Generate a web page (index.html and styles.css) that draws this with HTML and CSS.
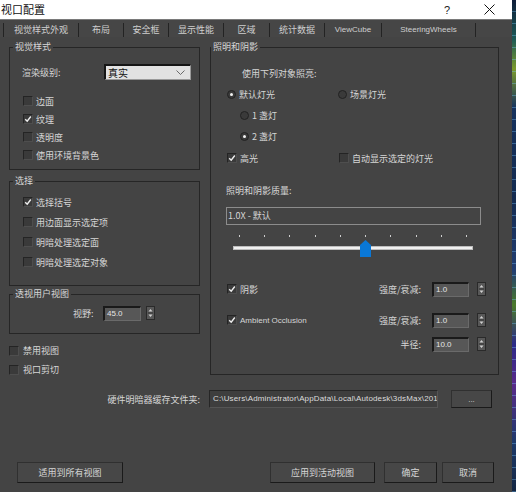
FILE: index.html
```html
<!DOCTYPE html>
<html lang="zh">
<head>
<meta charset="utf-8">
<title>视口配置</title>
<link rel="stylesheet" href="styles.css">
</head>
<body>
<div class="screen">
  <div class="dialog">
    <div class="titlebar">
      <span class="title">视口配置</span>
      <span class="help">?</span>
      <span class="close"><svg width="11" height="11" viewBox="0 0 11 11"><path d="M0.5 0.5 L10.5 10.5 M10.5 0.5 L0.5 10.5" stroke="#111" stroke-width="1" fill="none"/></svg></span>
    </div>
    <div class="tabs">
      <div class="tab first active" style="width:76px">视觉样式外观</div>
      <div class="tab" style="width:45px">布局</div>
      <div class="tab" style="width:45px">安全框</div>
      <div class="tab" style="width:55px">显示性能</div>
      <div class="tab" style="width:46px">区域</div>
      <div class="tab" style="width:55px">统计数据</div>
      <div class="tab latin" style="width:57px">ViewCube</div>
      <div class="tab latin" style="width:94px">SteeringWheels</div>
    </div>

    <div class="main">
      <div class="col-left">
        <fieldset class="group g1">
          <legend class="legend-l">视觉样式</legend>
          <div class="row-select">
            <span class="sel-label">渲染级别:</span>
            <div class="dropdown"><span>真实</span><svg width="9" height="6" viewBox="0 0 9 6"><path d="M0.5 0.5 L4.5 4.5 L8.5 0.5" stroke="#6a6a6a" fill="none"/></svg></div>
          </div>
          <div class="checks g1-checks">
            <div class="check"><span class="cb"></span><span>边面</span></div>
            <div class="check"><span class="cb on"><svg width="8" height="8" viewBox="0 0 8 8"><path d="M1.2 4.2 L3.2 6.2 L6.8 1.5" stroke="#eee" stroke-width="1.4" fill="none"/></svg></span><span>纹理</span></div>
            <div class="check"><span class="cb"></span><span>透明度</span></div>
            <div class="check"><span class="cb"></span><span>使用环境背景色</span></div>
          </div>
        </fieldset>

        <fieldset class="group g2">
          <legend class="legend-l">选择</legend>
          <div class="checks g2-checks">
            <div class="check"><span class="cb on"><svg width="8" height="8" viewBox="0 0 8 8"><path d="M1.2 4.2 L3.2 6.2 L6.8 1.5" stroke="#eee" stroke-width="1.4" fill="none"/></svg></span><span>选择括号</span></div>
            <div class="check"><span class="cb"></span><span>用边面显示选定项</span></div>
            <div class="check"><span class="cb"></span><span>明暗处理选定面</span></div>
            <div class="check"><span class="cb"></span><span>明暗处理选定对象</span></div>
          </div>
        </fieldset>

        <fieldset class="group g3">
          <legend class="legend-l">透视用户视图</legend>
          <div class="row-fov">
            <span class="fov-label">视野:</span>
            <span class="num fov-num">45.0</span>
            <span class="spin"><svg width="7" height="12" viewBox="0 0 7 12"><path d="M3.5 2 L5.5 4.5 L1.5 4.5 Z M1.5 7.5 L5.5 7.5 L3.5 10 Z" fill="#d0d0d0"/><path d="M1 6 H6" stroke="#333" stroke-width="1"/></svg></span>
          </div>
        </fieldset>

        <div class="checks loose">
          <div class="check"><span class="cb"></span><span>禁用视图</span></div>
          <div class="check"><span class="cb"></span><span>视口剪切</span></div>
        </div>
      </div>

      <div class="col-right">
        <fieldset class="group gr">
          <legend class="legend-r">照明和阴影</legend>
          <div class="r-row r1">使用下列对象照亮:</div>
          <div class="r-row r2">
            <div class="opt w111"><span class="rb on"></span><span>默认灯光</span></div>
            <div class="opt"><span class="rb"></span><span>场景灯光</span></div>
          </div>
          <div class="r-row r3"><div class="opt"><span class="rb"></span><span>1 盏灯</span></div></div>
          <div class="r-row r4"><div class="opt"><span class="rb on"></span><span>2 盏灯</span></div></div>
          <div class="r-row r5">
            <div class="opt w112"><span class="cb on"><svg width="8" height="8" viewBox="0 0 8 8"><path d="M1.2 4.2 L3.2 6.2 L6.8 1.5" stroke="#eee" stroke-width="1.4" fill="none"/></svg></span><span>高光</span></div>
            <div class="opt"><span class="cb"></span><span>自动显示选定的灯光</span></div>
          </div>
          <div class="r-row r6">照明和阴影质量:</div>
          <div class="quality">1.0X - 默认</div>
          <div class="slider">
            <div class="ticks">
              <i></i><i></i><i></i><i></i><i></i><i></i><i></i><i></i><i></i><i></i>
            </div>
            <div class="track"></div>
            <svg class="thumb" width="11" height="17" viewBox="0 0 11 17"><path d="M5.5 0 L11 5 L11 17 L0 17 L0 5 Z" fill="#0a78d7"/></svg>
          </div>
          <div class="r-row r9">
            <div class="opt"><span class="cb on"><svg width="8" height="8" viewBox="0 0 8 8"><path d="M1.2 4.2 L3.2 6.2 L6.8 1.5" stroke="#eee" stroke-width="1.4" fill="none"/></svg></span><span>阴影</span></div>
            <div class="param">
              <span class="p-label">强度/衰减:</span>
              <span class="num">1.0</span>
              <span class="spin"><svg width="7" height="12" viewBox="0 0 7 12"><path d="M3.5 2 L5.5 4.5 L1.5 4.5 Z M1.5 7.5 L5.5 7.5 L3.5 10 Z" fill="#d0d0d0"/><path d="M1 6 H6" stroke="#333" stroke-width="1"/></svg></span>
            </div>
          </div>
          <div class="r-row r10">
            <div class="opt"><span class="cb on"><svg width="8" height="8" viewBox="0 0 8 8"><path d="M1.2 4.2 L3.2 6.2 L6.8 1.5" stroke="#eee" stroke-width="1.4" fill="none"/></svg></span><span class="latin">Ambient Occlusion</span></div>
            <div class="param">
              <span class="p-label">强度/衰减:</span>
              <span class="num">1.0</span>
              <span class="spin"><svg width="7" height="12" viewBox="0 0 7 12"><path d="M3.5 2 L5.5 4.5 L1.5 4.5 Z M1.5 7.5 L5.5 7.5 L3.5 10 Z" fill="#d0d0d0"/><path d="M1 6 H6" stroke="#333" stroke-width="1"/></svg></span>
            </div>
          </div>
          <div class="r-row r11">
            <div class="param">
              <span class="p-label">半径:</span>
              <span class="num">10.0</span>
              <span class="spin"><svg width="7" height="12" viewBox="0 0 7 12"><path d="M3.5 2 L5.5 4.5 L1.5 4.5 Z M1.5 7.5 L5.5 7.5 L3.5 10 Z" fill="#d0d0d0"/><path d="M1 6 H6" stroke="#333" stroke-width="1"/></svg></span>
            </div>
          </div>
        </fieldset>
      </div>
    </div>

    <div class="cache-row">
      <span class="cache-label">硬件明暗器缓存文件夹:</span>
      <div class="path latin">C:\Users\Administrator\AppData\Local\Autodesk\3dsMax\2018</div>
      <div class="btn dots">...</div>
    </div>

    <div class="button-row">
      <div class="btn b-all">适用到所有视图</div>
      <div class="btn b-active">应用到活动视图</div>
      <div class="btn b-ok">确定</div>
      <div class="btn b-cancel">取消</div>
    </div>
  </div>
  <div class="desk"></div>
</div>
</body>
</html>
```

FILE: styles.css
```css
* { box-sizing: border-box; }

html, body {
  margin: 0;
  padding: 0;
  background: #1c2b44;
}

body {
  font-family: "Noto Sans CJK SC", "Liberation Sans", sans-serif;
  font-size: 9px;
  color: #d6d6d6;
}

.screen {
  display: flex;
  width: 516px;
  height: 492px;
  overflow: hidden;
}

.dialog {
  width: 512px;
  height: 492px;
  background: #444444;
  display: flex;
  flex-direction: column;
}

.desk {
  width: 4px;
  height: 492px;
  background:
    repeating-linear-gradient(180deg, transparent 0 11px, rgba(120,200,255,0.35) 11px 12px),
    linear-gradient(180deg, #0f1e3a 0%, #1d5a56 8%, #7c9a2c 14%, #16325e 22%, #142b50 40%, #223e72 55%, #4b7a2a 62%, #2b2a88 70%, #5a2a8a 78%, #1d3a6a 90%, #142642 100%);
}

/* title bar */
.titlebar {
  height: 19px;
  background: #ffffff;
  display: flex;
  align-items: center;
  color: #111;
}
.title {
  font-size: 11px;
  padding-left: 1px;
  line-height: 19px;
}
.help {
  margin-left: auto;
  font-family: "Liberation Sans", sans-serif;
  font-size: 11px;
  color: #222;
  margin-right: 34px;
}
.close {
  display: flex;
  margin-right: 17px;
}

/* tabs */
.tabs {
  height: 18px;
  background: #464646;
  border-top: 1px solid #7a7a7a;
  display: flex;
  padding-left: 3px;
}
.tab {
  margin-top: 3px;
  height: 14px;
  line-height: 14px;
  border-right: 1px solid #232323;
  text-align: center;
  color: #cfcfcf;
  font-size: 9px;
}
.tab.first { border-left: 1px solid #232323; }
.tab.latin {
  font-family: "Liberation Sans", sans-serif;
  font-size: 8px;
}

.latin {
  font-family: "Liberation Sans", sans-serif;
  font-size: 8px;
}

/* main area */
.main {
  height: 353px;
  display: flex;
  padding: 3px 0 0 9px;
  gap: 10px;
}
.col-left {
  width: 191px;
  display: flex;
  flex-direction: column;
}
.col-right {
  width: 289px;
}

.group {
  margin: 0;
  padding: 0;
  min-width: 0;
  border: 1px solid #262626;
}
.legend-l, .legend-r {
  padding: 0 2px;
  line-height: 14px;
  font-size: 9px;
  color: #d6d6d6;
}
.legend-l { margin-left: 3px; }
.legend-r { margin-left: 0; }

.g1 { height: 130px; }
.g2 { height: 112px; margin-top: 4px; }
.g3 { height: 47px; margin-top: 1px; }

.row-select {
  margin-top: 10px;
  height: 16px;
  display: flex;
  align-items: center;
  padding-left: 12px;
}
.sel-label { width: 82px; }
.dropdown {
  width: 87px;
  height: 16px;
  background: #e2e2e2;
  border-top: 2px solid #151515;
  border-left: 2px solid #151515;
  border-right: 1px solid #9a9a9a;
  border-bottom: 1px solid #9a9a9a;
  color: #111;
  display: flex;
  align-items: center;
  justify-content: space-between;
  padding: 0 5px 0 2px;
  font-size: 10px;
}

.checks { display: flex; flex-direction: column; }
.check {
  display: flex;
  align-items: center;
  gap: 3px;
}
.g1-checks { margin-top: 12px; padding-left: 13px; }
.g1-checks .check { height: 18px; }
.g2-checks { margin-top: 4px; padding-left: 13px; }
.g2-checks .check { height: 20px; }
.loose { margin-top: 7px; padding-left: 0; }
.loose .check { height: 19px; gap: 4px; }

.cb {
  width: 10px;
  height: 10px;
  background: #3a3a3a;
  border: 1px solid #242424;
  border-right-color: #4e4e4e;
  border-bottom-color: #4e4e4e;
  display: inline-flex;
  align-items: center;
  justify-content: center;
  flex: none;
}
.rb {
  width: 9px;
  height: 9px;
  border-radius: 50%;
  background: #3a3a3a;
  border: 1px solid #222;
  display: inline-flex;
  align-items: center;
  justify-content: center;
  flex: none;
}
.rb.on::after {
  content: "";
  width: 3px;
  height: 3px;
  border-radius: 50%;
  background: #f2f2f2;
}

.row-fov {
  margin-top: 4px;
  height: 16px;
  display: flex;
  align-items: center;
  padding-left: 63px;
}
.fov-label { width: 30px; }
.num {
  height: 15px;
  width: 37px;
  background: #575757;
  border-top: 2px solid #1a1a1a;
  border-left: 2px solid #1a1a1a;
  border-right: 1px solid #6a6a6a;
  border-bottom: 1px solid #6a6a6a;
  font-family: "Liberation Sans", sans-serif;
  font-size: 8px;
  line-height: 12px;
  padding-left: 2px;
  color: #e6e6e6;
}
.fov-num { width: 38px; }
.spin {
  width: 9px;
  height: 14px;
  background: #585858;
  border: 1px solid #2a2a2a;
  display: inline-flex;
  align-items: center;
  justify-content: center;
  margin-left: 5px;
  flex: none;
}

/* right group */
.gr { height: 335px; }
.r-row {
  height: 16px;
  display: flex;
  align-items: center;
}
.r1 { margin-top: 11px; padding-left: 31px; }
.r2 { margin-top: 5px; padding-left: 16px; }
.r3 { margin-top: 5px; padding-left: 29px; }
.r4 { margin-top: 5px; padding-left: 29px; }
.r5 { margin-top: 6px; padding-left: 16px; }
.r6 { margin-top: 16px; padding-left: 15px; }
.opt { display: flex; align-items: center; gap: 3px; }
.w111 { width: 111px; }
.w112 { width: 112px; }

.quality {
  margin: 9px 0 0 15px;
  width: 255px;
  height: 18px;
  border: 1px solid #8c8c8c;
  line-height: 15px;
  padding-left: 1px;
  color: #d6d6d6;
}

.slider {
  position: relative;
  margin: 10px 0 0 22px;
  width: 240px;
  height: 23px;
}
.ticks {
  margin-top: 1px;
  height: 2px;
  padding: 0 6px;
  display: flex;
  justify-content: space-between;
}
.ticks i {
  width: 1px;
  height: 2px;
  background: #cfcfcf;
}
.track {
  margin-top: 9px;
  height: 4px;
  background: #f0f0f0;
  border: 1px solid #bdbdbd;
}
.thumb {
  position: absolute;
  left: 127px;
  top: 5px;
}

.r9 { margin-top: 23px; padding: 0 12px 0 16px; }
.r10 { margin-top: 15px; padding: 0 12px 0 16px; }
.r11 { margin-top: 8px; padding: 0 12px 0 16px; }
.param {
  margin-left: auto;
  display: flex;
  align-items: center;
}
.p-label { margin-right: 11px; }
.param .spin { margin-left: 8px; }

/* cache row */
.cache-row {
  height: 18px;
  display: flex;
  align-items: center;
}
.cache-label {
  width: 200px;
  text-align: right;
}
.path {
  margin-left: 9px;
  width: 229px;
  height: 18px;
  background: #3e3e3e;
  border: 1px solid #262626;
  border-right-color: #555;
  border-bottom-color: #555;
  line-height: 16px;
  padding-left: 3px;
  white-space: nowrap;
  overflow: hidden;
  color: #dcdcdc;
  letter-spacing: 0.15px;
}

.btn {
  height: 21px;
  background: #474747;
  border: 1px solid #303030;
  border-right-color: #1a1a1a;
  border-bottom-color: #1a1a1a;
  display: flex;
  align-items: center;
  justify-content: center;
  color: #d6d6d6;
}
.dots {
  margin-left: 13px;
  width: 41px;
  height: 18px;
  font-family: "Liberation Sans", sans-serif;
  font-size: 8px;
}

.button-row {
  margin-top: 54px;
  display: flex;
  padding-left: 17px;
}
.b-all { width: 106px; }
.b-active { width: 105px; margin-left: 147px; }
.b-ok { width: 53px; margin-left: 9px; }
.b-cancel { width: 52px; margin-left: 5px; }
```
